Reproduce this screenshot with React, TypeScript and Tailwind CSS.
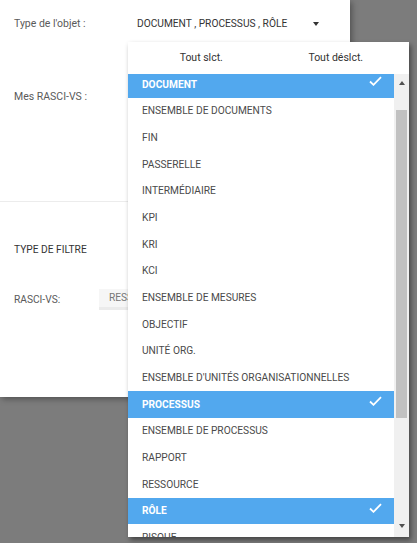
import type React from "react";

interface ObjectType {
  label: string;
  selected: boolean;
}

const objectTypes: ObjectType[] = [
  { label: "DOCUMENT", selected: true },
  { label: "ENSEMBLE DE DOCUMENTS", selected: false },
  { label: "FIN", selected: false },
  { label: "PASSERELLE", selected: false },
  { label: "INTERMÉDIAIRE", selected: false },
  { label: "KPI", selected: false },
  { label: "KRI", selected: false },
  { label: "KCI", selected: false },
  { label: "ENSEMBLE DE MESURES", selected: false },
  { label: "OBJECTIF", selected: false },
  { label: "UNITÉ ORG.", selected: false },
  { label: "ENSEMBLE D'UNITÉS ORGANISATIONNELLES", selected: false },
  { label: "PROCESSUS", selected: true },
  { label: "ENSEMBLE DE PROCESSUS", selected: false },
  { label: "RAPPORT", selected: false },
  { label: "RESSOURCE", selected: false },
  { label: "RÔLE", selected: true },
  { label: "RISQUE", selected: false },
];

const CheckMark: React.FC = () => (
  <svg width="13" height="10" viewBox="0 0 13 10" className="absolute right-[12px] top-[5px]">
    <polyline points="1,5.5 4.5,8.8 12,1.2" fill="none" stroke="#ffffff" strokeWidth="1.8" />
  </svg>
);

const App: React.FC = () => {
  return (
    <div className="relative w-[417px] h-[543px] overflow-hidden bg-[#7c7c7c] font-['Roboto',sans-serif]">
      {/* Filter panel */}
      <div className="w-[350px] h-[397px] bg-white shadow-[2px_2px_6px_rgba(0,0,0,0.35)]">
        <div className="h-[202px] border-b border-[#ececec] px-[14px] pt-[16px]">
          <div className="flex h-[16px] items-center">
            <span className="w-[123px] text-[10.5px] text-[#5a5a5a]">Type de l'objet :</span>
            <span className="text-[10.2px] text-[#333]">DOCUMENT , PROCESSUS , RÔLE</span>
            <span className="ml-[26px] w-0 h-0 border-l-[3px] border-r-[3px] border-t-[4px] border-l-transparent border-r-transparent border-t-[#333]" />
          </div>
          <div className="mt-[57px] flex h-[16px] items-center">
            <span className="text-[10.5px] text-[#5a5a5a]">Mes RASCI-VS :</span>
          </div>
        </div>
        <div className="px-[14px]">
          <div className="mt-[40px] flex h-[16px] items-center">
            <span className="text-[10.2px] text-[#333]">TYPE DE FILTRE</span>
          </div>
          <div className="mt-[31px] flex h-[21px] items-center">
            <span className="w-[85px] text-[10.2px] text-[#5a5a5a]">RASCI-VS:</span>
            <div className="flex h-[21px] w-[170px] items-center bg-[#f6f6f6] border-b-[3px] border-[#ebebeb] pl-[10px] text-[10.2px] text-[#777]">
              RESSOURCE
            </div>
          </div>
        </div>
      </div>

      {/* Multi-select dropdown */}
      <div className="absolute left-[128px] top-[42px] w-[281px] h-[495px] flex flex-col bg-white shadow-[2px_3px_5px_rgba(0,0,0,0.45)]">
        <div className="flex h-[32px] items-center px-[6px] text-[10.5px] text-[#333]">
          <span className="flex-1 text-center">Tout slct.</span>
          <span className="flex-1 text-center">Tout déslct.</span>
        </div>
        <div className="flex flex-1 overflow-hidden">
          <div className="flex-1 overflow-hidden">
            <div className="-mt-[3px]">
              {objectTypes.map((item) => (
                <div
                  key={item.label}
                  className={`relative flex h-[26.67px] items-center pl-[14px] text-[10.2px] whitespace-nowrap ${
                    item.selected ? "bg-[#52a8ee] font-bold text-white" : "text-[#4a4a4a]"
                  }`}
                >
                  {item.label}
                  {item.selected && <CheckMark />}
                </div>
              ))}
            </div>
          </div>
          {/* Scrollbar */}
          <div className="flex w-[15px] flex-col bg-[#f0f0f0]">
            <div className="flex h-[18px] items-center justify-center">
              <span className="w-0 h-0 border-l-[3.5px] border-r-[3.5px] border-b-[4px] border-l-transparent border-r-transparent border-b-[#505050]" />
            </div>
            <div className="flex-1 px-[2px]">
              <div className="mt-[18px] h-[308px] bg-[#c1c1c1]" />
            </div>
            <div className="flex h-[20px] items-center justify-center pb-[2px]">
              <span className="w-0 h-0 border-l-[3.5px] border-r-[3.5px] border-t-[4px] border-l-transparent border-r-transparent border-t-[#505050]" />
            </div>
          </div>
        </div>
      </div>
    </div>
  );
};

export default App;
